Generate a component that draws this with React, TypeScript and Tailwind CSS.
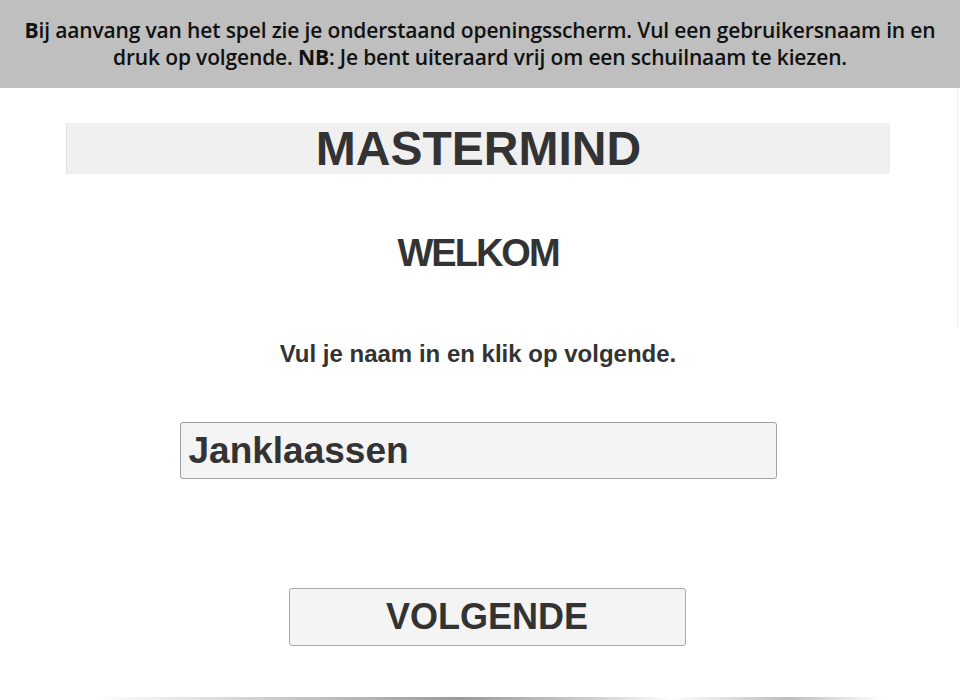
export default function App() {
  return (
    <div className="relative h-[700px] w-[960px] overflow-hidden bg-white">
      <div className="flex h-[88px] items-center justify-center bg-[#bfbfbf] px-4 text-center">
        <p className="font-['Open_Sans',sans-serif] text-[21px] font-semibold leading-[27px] tracking-[-0.15px] text-[#111]">
          <span className="font-bold">B</span>ij aanvang van het spel zie je onderstaand openingsscherm. Vul een gebruikersnaam in en
          <br />
          druk op volgende. <span className="font-bold">NB</span>: Je bent uiteraard vrij om een schuilnaam te kiezen.
        </p>
      </div>

      <div className="flex w-[956px] flex-col items-center font-['Liberation_Sans',Arial,sans-serif] text-[#333]">
        <div className="mt-[35px] flex h-[51px] w-[824px] items-center justify-center border-l border-[#e2e2e2] bg-[#f0f0f0]">
          <span className="text-[48px] font-bold leading-none">MASTERMIND</span>
        </div>

        <div className="mt-[60px] text-[38px] font-bold leading-none tracking-[-2px]">WELKOM</div>

        <div className="mt-[70px] text-[24px] font-bold leading-none">Vul je naam in en klik op volgende.</div>

        <div className="mt-[56px] flex h-[57px] w-[597px] items-center rounded-[3px] border border-[#a0a0a0] bg-[#f4f4f4] px-[8px]">
          <span className="text-[37px] font-bold leading-none">Janklaassen</span>
        </div>

        <button className="ml-[18px] mt-[109px] flex h-[58px] w-[397px] items-center justify-center rounded-[3px] border border-[#a8a8a8] bg-[#f4f4f4]">
          <span className="text-[36px] font-bold leading-none text-[#333]">VOLGENDE</span>
        </button>
      </div>

      <div className="absolute bottom-0 left-0 h-[3px] w-full bg-[linear-gradient(90deg,transparent_10%,#c8c8c8_30%,#9a9a9a_48%,#d0d0d0_62%,transparent_70%,#bdbdbd_82%,transparent_92%)]" />
      <div className="absolute right-[2px] top-[88px] h-[240px] w-px bg-[#ececec]" />
    </div>
  );
}
